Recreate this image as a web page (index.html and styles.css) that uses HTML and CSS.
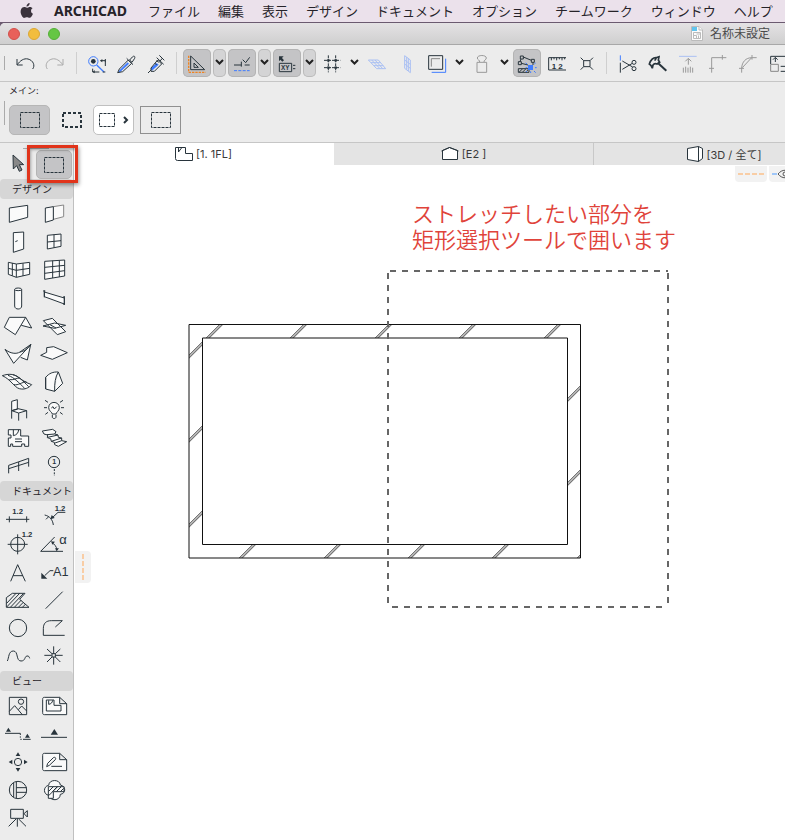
FILE: index.html
```
<!DOCTYPE html>
<html lang="ja">
<head>
<meta charset="utf-8">
<title>名称未設定 - ARCHICAD</title>
<link rel="stylesheet" href="styles.css">
</head>
<body>
<nav class="menubar" aria-label="メニューバー">
  <svg class="apple" viewBox="0 0 14 17" aria-hidden="true"><path d="M9.800 0c.1 1.100-.3 2-.9 2.700-.6.700-1.500 1.200-2.400 1.100-.1-1 .4-2 .9-2.600C8 .5 9 .1 9.800 0zM12.900 5.700c-1 .6-1.600 1.500-1.600 2.700 0 1.400.8 2.400 2 2.900-.3.900-.7 1.700-1.200 2.500-.7 1-1.400 2-2.500 2s-1.400-.6-2.700-.6-1.700.6-2.700.6C3 15.900 2.300 14.900 1.600 13.900.2 11.900-.3 8.600.800 6.500c.7-1.400 1.900-2.200 3.200-2.200 1.200 0 2 .7 3 .7.9 0 1.700-.8 3.200-.8 1.100 0 2.100.6 2.700 1.500z"/></svg>
  <strong class="app-name">ARCHICAD</strong>
  <span>ファイル</span><span>編集</span><span>表示</span><span>デザイン</span><span>ドキュメント</span><span>オプション</span><span>チームワーク</span><span>ウィンドウ</span><span>ヘルプ</span>
</nav>

<div class="window">
  <header class="titlebar">
    <div class="lights">
      <button class="light close" aria-label="閉じる"></button>
      <button class="light minimize" aria-label="しまう"></button>
      <button class="light zoom" aria-label="拡大"></button>
    </div>
    <div class="doc-title">
      <svg viewBox="0 0 12 15" width="12" height="15" aria-hidden="true"><path class="page" d="M.5.500h7.500l3.500 3.500v10.500H.5z"/><path class="page-tint" d="M1 1h5v4H1z"/><path class="page" d="M8 .5V4h3.500"/><path class="page-lines" d="M2.500 6.500h7v6h-7zM2.500 9.500h3v3M5.500 8h4M7.500 9.500v3"/></svg>
      <span>名称未設定</span>
    </div>
  </header>

  <div class="toolbar" role="toolbar" aria-label="標準">
    <span class="grip"></span>
    <button class="tool" aria-label="取り消し"><svg viewBox="36 144 90 90"><path d="M51 177v18h17M52 194c8-12 20-20 32-17 16 4 22 20 14 30"/></svg></button>
    <button class="tool" aria-label="やり直し"><svg class="dim" viewBox="126 144 90 90"><path d="M189 177v18h-17M188 194c-8-12-20-20-32-17-16 4-22 20-14 30"/></svg></button>
    <span class="sep"></span>
    <button class="tool" aria-label="検索と選択"><svg viewBox="246 144 90 90"><circle cx="280" cy="184" r="14" class="blue"/><path d="M290 195l22 21" class="blue thick"/><circle cx="280" cy="184" r="7" class="solid"/><path d="M302 182h14v16M316 177v8M278 206v10h20M308 216h8"/><path d="M300 182l7-5v10zM278 216l6-6v10z" class="solid"/></svg></button>
    <button class="tool" aria-label="スポイト"><svg viewBox="336 144 90 90"><path d="M383 187l-24 23-5 8 9-4 24-23" class="bluefill"/><path d="M353 218l5-11 27-27 10 10-27 25zM380 175l19 19M389 180l8-9c5-5 9-2 7 4l-8 12z"/></svg></button>
    <button class="tool" aria-label="パラメータ転送"><svg viewBox="426 144 90 90"><path d="M470 189l-18 16 4 7 20-18z" class="bluefill"/><path d="M444 219l10-10M453 204l20-24 12 12-22 22h-10zM470 173l21 20M478 166l15 15M480 183l8-9M470 182l6 5M464 189l6 6"/></svg></button>
    <span class="sep"></span>
    <button class="tool on" aria-label="ガイド線"><svg viewBox="546 144 90 90"><path d="M572 168v41h42zM582 189v13h13z"/><path d="M566 167v50h51" class="orange" stroke-dasharray="7 3"/></svg></button>
    <button class="drop on" aria-label="ガイド線の設定"><svg viewBox="0 0 15 30"><path d="M4 12l3.500 3.500L11 12"/></svg></button>
    <button class="tool on" aria-label="スナップガイド"><svg viewBox="681 144 90 90"><path d="M702 195h22M734 195h15M724 185v15M728 179l9 9 12-16"/><path d="M702 212h47" class="blue" stroke-dasharray="9 4"/></svg></button>
    <button class="drop on" aria-label="スナップガイドの設定"><svg viewBox="0 0 15 30"><path d="M4 12l3.500 3.500L11 12"/></svg></button>
    <button class="tool on" aria-label="座標表示"><svg viewBox="816 144 90 90"><path d="M838 190h37v25h-37zM879 196h7M879 206h7"/><path d="M837 169h14l-5 5 6 7-5 4-6-6-4 5z" class="solid"/><text x="843" y="209" class="t-xy">XY</text></svg></button>
    <button class="drop on" aria-label="座標表示の設定"><svg viewBox="0 0 15 30"><path d="M4 12l3.500 3.500L11 12"/></svg></button>
    <button class="tool" aria-label="グリッドスナップ"><svg viewBox="951 144 90 90"><path d="M985 166v51M1007 166v51M972 181h49M972 203h49" stroke-dasharray="9 3"/><path d="M985 181h.1M1007 181h.1M985 203h.1M1007 203h.1" class="dots"/></svg></button>
    <button class="drop" aria-label="グリッドの設定"><svg viewBox="0 0 15 30"><path d="M4 12l3.500 3.500L11 12"/></svg></button>
    <button class="tool" aria-label="編集平面"><svg class="pale" viewBox="1086 144 90 90"><path d="M1105 180h30l22 26h-27zM1113 188h29M1121 197h29M1115 180l25 26M1125 180l23 26"/></svg></button>
    <button class="tool" aria-label="垂直平面"><svg class="pale" viewBox="21 144 90 90"><path d="M59 167l17 13v38l-17-13zM65 171v38M70 175v38M59 180l17 13M59 192l17 13"/></svg></button>
    <button class="tool" aria-label="トレース"><svg viewBox="111 144 90 90"><path d="M140 217h42v-41" class="blue"/><path d="M131 167h42v41h-42z"/><path d="M139 200v-24h26" class="gray"/></svg></button>
    <button class="drop" aria-label="トレースの設定"><svg viewBox="0 0 15 30"><path d="M4 12l3.500 3.500L11 12"/></svg></button>
    <button class="tool" aria-label="重力"><svg class="gray-icon" viewBox="246 144 90 90"><path d="M284 186c1-6-7-6-7-12 0-10 27-10 27 0 0 6-8 6-7 12M276 187h29v30h-29z"/></svg></button>
    <button class="drop" aria-label="重力の設定"><svg viewBox="0 0 15 30"><path d="M4 12l3.500 3.500L11 12"/></svg></button>
    <button class="tool on" aria-label="辺のハンドル"><svg viewBox="381 144 90 90"><path d="M406 168h9v9h-9zM439 178h9v9h-9zM400 185h9v9h-9zM415 171l24 10M409 190l20 5M444 187v8M408 177l-3 8M400 206h32v11h-32zM403 216l9-9M413 216l9-9M423 216l8-9"/><path d="M429 195h15v15h-15z" class="bluefill"/><path d="M426 192l-4-3M448 192l4-3M450 203h5M447 213l5 5M426 213l-3 3M437 214v5M422 203h5" class="blue"/></svg></button>
    <button class="tool" aria-label="寸法"><svg viewBox="471 144 90 90"><path d="M543 173h-52v37h52M499 173v8M507 173v5M515 173v8M523 173v5M531 173v8M539 173v5"/><text x="500" y="206" class="t-rule">1</text><text x="520" y="206" class="t-rule">2</text></svg></button>
    <button class="tool" aria-label="交差を表示"><svg viewBox="561 144 90 90"><path d="M596 182h19v18h-19zM587 173l9 9M624 173l-9 9M587 209l9-9M624 209l-9-9"/></svg></button>
    <span class="sep"></span>
    <button class="tool" aria-label="分割"><svg viewBox="681 144 90 90"><path d="M706 166v16" class="blue"/><path d="M706 188v30M712 183l31 18M712 208l30-18"/><circle cx="747" cy="187" r="6"/><circle cx="747" cy="206" r="6"/></svg></button>
    <button class="tool" aria-label="調整"><svg viewBox="771 144 90 90"><path class="heavy-tool" d="M793 192c4-12 9-19 20-19l9-3-2 10 4 7-8 5c-5-2-8-3-12 3l-2 10c-2-7-5-11-9-13zM814 174l-5 8"/><path d="M818 188l26 24" class="thicker"/></svg></button>
    <button class="tool" aria-label="上に調整"><svg class="gray-icon" viewBox="861 144 90 90"><path d="M882 169h53" class="pale-line"/><path d="M910 194v-18M901 184l9-9 9 9M895 203v15M902 200v18M909 203v15M916 200v18M923 203v15"/></svg></button>
    <button class="tool" aria-label="交差"><svg class="gray-icon" viewBox="951 144 90 90"><path d="M980 218v-45h44M972 205h15M1012 165v14"/></svg></button>
    <button class="tool" aria-label="フィレット"><svg class="gray-icon" viewBox="1041 144 90 90"><path d="M1070 218v-14c1-18 12-31 31-31h14M1062 205h15M1101 165v14M1072 203l27-29"/></svg></button>
    <button class="tool" aria-label="サイズ変更"><svg viewBox="1131 144 90 90"><path d="M1157 192v-23h54v45h-24M1171 186v-13M1164 179l7-7 7 7M1187 199h20"/><path d="M1157 193h23v21h-23z" class="gray"/></svg></button>
  </div>

  <div class="infobox">
    <span class="info-label">メイン:</span>
    <div class="info-row">
      <button class="info-btn on" aria-label="矩形選択"><svg viewBox="0 0 20 16"><path d="M.5.500h19v15H.5z" stroke-dasharray="3 1"/></svg></button>
      <button class="info-btn" aria-label="全フロア選択"><svg viewBox="0 0 20 16"><path class="heavy" d="M1 1h18v14H1z" stroke-dasharray="3 2"/></svg></button>
      <button class="info-btn white" aria-label="選択形状"><svg class="small" viewBox="0 0 16 14"><path d="M.5.500h15v13H.5z" stroke-dasharray="3 1"/></svg><svg class="next" viewBox="0 0 6 8"><path d="M1 1l3 3-3 3"/></svg></button>
      <button class="info-btn framed" aria-label="矩形"><svg viewBox="0 0 20 16"><path d="M.5.500h19v15H.5z" stroke-dasharray="3 1"/></svg></button>
    </div>
  </div>

  <div class="workspace">
    <aside class="toolbox">
      <div class="select-row">
        <button class="cell" aria-label="矢印"><svg viewBox="0 189 108 105"><path d="M39 225l1 42 10-10 8 17 8-4-8-16h13z" class="arrow"/></svg></button>
        <button class="cell marquee" aria-label="矩形選択ツール"><svg viewBox="0 0 20 16"><path d="M.5.500h19v15H.5z" stroke-dasharray="3 1"/></svg></button>
        <span class="highlight"></span>
      </div>
      <h2>デザイン</h2>
      <div class="grid">
        <button class="cell" aria-label="壁"><svg viewBox="0 0 108 84"><path class="w" d="M28 24l55-8v36l-55 15z"/></svg></button>
        <button class="cell" aria-label="壁端部"><svg viewBox="108 0 108 84"><path class="w gray" d="M160 20l31-5v35l-31 8z"/><path class="w" d="M136 24l24-4v40l-24 7z"/></svg></button>
        <button class="cell" aria-label="ドア"><svg viewBox="0 84 108 84"><path class="w" d="M40 98l31-2v51l-31 10z"/><path d="M46 125l7-3"/></svg></button>
        <button class="cell" aria-label="窓"><svg viewBox="108 84 108 84"><path class="w" d="M142 106l41-4v37l-41 8zM162 104v39M142 126l41-4"/></svg></button>
        <button class="cell" aria-label="コーナー窓"><svg viewBox="0 168 108 84"><path class="w" d="M25 187l24 5 40-5v36l-40 9-24-9zM37 189v38M49 192v40M69 190v38M25 205l24 6 40-6"/></svg></button>
        <button class="cell" aria-label="カーテンウォール"><svg viewBox="108 168 108 84"><path class="w" d="M134 184l60-4v48l-60 10zM158 182v52M178 181v50M134 202l60-6M134 220l60-8"/></svg></button>
        <button class="cell" aria-label="柱"><svg viewBox="0 252 108 84"><path class="w" d="M44 269v49c0 12 21 12 21 0v-49z"/><ellipse class="w" cx="54.500" cy="268" rx="10.500" ry="4"/></svg></button>
        <button class="cell" aria-label="梁"><svg viewBox="108 252 108 84"><path class="w" d="M133 276l60 18v18l-60-22zM133 271v21M193 289v26M129 273h7M189 291h6M189 312h6"/></svg></button>
        <button class="cell" aria-label="屋根"><svg viewBox="0 336 108 84"><path class="w" d="M28 352h49l-31 52-33-22zM77 352l18 32-31-8"/></svg></button>
        <button class="cell" aria-label="スカイライト"><svg viewBox="108 336 108 84"><path class="w" d="M130 362l27-7 40 40-25 9zM129 378l35-9 33 7-33 9zM150 374l18 10"/></svg></button>
        <button class="cell" aria-label="シェル"><svg viewBox="0 0 108 84"><path class="w" d="M15 28c16 13 34 15 45 8l33-23-52 57zM60 36c12-2 22-8 32-22l-10 46-20-8"/></svg></button>
        <button class="cell" aria-label="スラブ"><svg viewBox="108 0 108 84"><path class="w" d="M140 23l21-3 41 18-45 20-35-12 18-9z"/></svg></button>
        <button class="cell" aria-label="メッシュ"><svg viewBox="0 84 108 84"><path class="w" d="M7 107c20-7 35-4 44 2s24 19 44 25c-9 10-22 16-37 12S32 118 7 107zM24 106c20 7 34 24 50 39M38 104c18 4 32 20 48 36M28 119c12 2 22-5 31-5M42 134c12 3 25-8 37-9"/></svg></button>
        <button class="cell" aria-label="モルフ"><svg viewBox="108 84 108 84"><path class="w" d="M137 112c10-12 22-17 38-16l13 34-24 24-27-7zM137 112v35M175 96c-9 14-12 35-11 58"/></svg></button>
        <button class="cell" aria-label="オブジェクト"><svg viewBox="0 168 108 84"><path class="w" d="M35 184l17-5v29l-17 4zM35 212l19-6 26 6-24 7zM35 212v24M56 219v23M80 212v23"/></svg></button>
        <button class="cell" aria-label="ランプ"><svg viewBox="108 168 108 84"><path class="w" d="M157 222c0-5-11-9-11-19 0-21 32-21 32 0 0 10-10 14-10 19zM157 224v7c0 6 11 6 11 0v-7"/><path d="M154 204l5-4 4 7 7-7M132 203h9M183 203h9M135 181l9 6M189 181l-9 6M136 223l8-6M188 223l-8-6"/></svg></button>
        <button class="cell" aria-label="ゾーン"><svg viewBox="0 252 108 84"><path class="w" d="M25 269h37v19h24v31H74v-7h-9v7H38v-7h-6v7h-7v-25h8v-9h-8z"/><path d="M40 269v18c10-2 15-8 16-18M45 297h21M45 305h21"/></svg></button>
        <button class="cell" aria-label="階段"><svg viewBox="108 252 108 84"><path class="w" d="M127 273l31-5 10 7-4 7 10 3 1 7 10 2v8l15 3-25 14-11-5-1-7-9-3-2-8-10-3 1-8-11-3zM141 284l23-2M143 292l31-7M154 304l31-10M165 309l20-7"/></svg></button>
        <button class="cell" aria-label="手摺り"><svg viewBox="0 336 108 84"><path d="M26 400v-24l60-21v25M56 366v27M26 386l60-19"/></svg></button>
        <button class="cell" aria-label="柱芯"><svg viewBox="108 336 108 84"><circle cx="162" cy="366" r="17"/><text x="157" y="373" class="t-num">1</text><path d="M163 387v21" stroke-dasharray="6 4"/></svg></button>
      </div>
      <h2>ドキュメント</h2>
      <div class="grid">
        <button class="cell" aria-label="直線寸法"><svg viewBox="0 66 108 84"><path d="M18 118h70M28 109v18M80 109v18"/><text x="37" y="103" class="t-dim">1.2</text></svg></button>
        <button class="cell" aria-label="半径寸法"><svg viewBox="108 66 108 84"><path d="M134 105c14 3 24 13 26 30M196 97h-22l-19 18M145 111l-7 7"/><path d="M151 118l4-13 9 9z" class="solid"/><text x="164" y="92" class="t-dim">1.2</text></svg></button>
        <button class="cell" aria-label="高さ寸法"><svg viewBox="0 150 108 84"><circle cx="53" cy="193" r="21"/><path d="M23 193h60M53 163v60"/><text x="65" y="171" class="t-dim">1.2</text></svg></button>
        <button class="cell" aria-label="角度寸法"><svg viewBox="108 150 108 84"><path d="M164 171l-42 43h67M156 188c7 4 14 12 15 22"/><path d="M153 184l12 1-8 9zM165 205h12l-7 9z" class="solid"/><text x="178" y="193" class="t-alpha">α</text></svg></button>
        <button class="cell" aria-label="テキスト"><svg viewBox="0 234 108 84"><path d="M32 304l21-50 23 50M39 287h30"/></svg></button>
        <button class="cell" aria-label="ラベル"><svg viewBox="108 234 108 84"><path d="M134 287l16-15h10"/><path d="M124 278v18h18z" class="solid"/><text x="159" y="288" class="t-label">A1</text></svg></button>
        <button class="cell" aria-label="塗りつぶし"><svg viewBox="0 318 108 84"><path d="M19 382v-29l18-13h38l-16 18 28 24zM20 370l28-30M20 381l39-41M31 382l39-41M43 382l21-22M55 382l15-15M67 382l10-10"/></svg></button>
        <button class="cell" aria-label="線"><svg viewBox="108 318 108 84"><path d="M137 386l51-51"/></svg></button>
        <button class="cell" aria-label="円"><svg viewBox="0 402 108 84"><circle cx="54" cy="444" r="26"/></svg></button>
        <button class="cell" aria-label="ポリライン"><svg viewBox="108 402 108 84"><path d="M194 466h-64v-20c0-16 8-24 24-24h33l-21 19"/></svg></button>
        <button class="cell" aria-label="スプライン"><svg viewBox="0 486 108 84"><path d="M22 543c5-9 3-30 18-30 16 0 7 30 23 30 14 0 10-14 18-15 5-1 7 3 8 7"/></svg></button>
        <button class="cell" aria-label="ホットスポット"><svg viewBox="108 486 108 84"><path d="M161 499v22M161 531v23M133 526h22M166 526h22M141 507l15 14M181 507l-15 14M141 546l15-15M181 546l-15-15M156 521h10v10h-10z"/></svg></button>
      </div>
      <h2>ビュー</h2>
      <div class="grid">
        <button class="cell" aria-label="図"><svg viewBox="0 81 108 84"><path d="M28 97h52v52H28zM28 139l16-17 23 27M55 134l10-11 15 15"/><circle cx="63" cy="110" r="8"/></svg></button>
        <button class="cell" aria-label="図面"><svg viewBox="108 81 108 84"><path class="w" d="M133 97h46l21 19v33h-67c-4 0-5-2-5-6v-40c0-4 1-6 5-6zM179 97v19h21M139 105h23v16h21v17h-44zM146 106v12c7-1 11-5 12-12"/></svg></button>
        <button class="cell" aria-label="断面図"><svg viewBox="0 165 108 84"><path d="M15 205h46v5M61 214v4M61 223h4M69 223h23"/><path d="M18 200l7-12 8 12zM75 218l7-12 8 12z" class="solid"/></svg></button>
        <button class="cell" aria-label="立面図"><svg viewBox="108 165 108 84"><path d="M123 217h78"/><path d="M152 209l11-17 11 17z" class="solid"/></svg></button>
        <button class="cell" aria-label="展開図"><svg viewBox="0 249 108 84"><circle cx="54" cy="291" r="11"/><path d="M47 273l7-11 7 11zM47 309l7 11 7-11zM37 284l-11 7 11 7zM72 284l11 7-11 7z" class="solid"/></svg></button>
        <button class="cell" aria-label="ワークシート"><svg viewBox="108 249 108 84"><path class="w" d="M133 265h46l21 19v33h-67c-4 0-5-2-5-6v-40c0-4 1-6 5-6zM179 265v19h21M140 305l3-10 17-17c5-3 9 1 6 6l-18 17zM154 304h32"/></svg></button>
        <button class="cell" aria-label="詳細図"><svg viewBox="0 333 108 84"><circle cx="54" cy="375" r="26"/><path d="M41 353v44M49 350v50M49 368h31M49 382h31"/></svg></button>
        <button class="cell" aria-label="変更"><svg viewBox="108 333 108 84"><path class="w" d="M146 361c1-19 34-19 35-1 18 4 17 26 0 28-1 21-30 21-34 3-18-2-18-27-1-30z"/><path class="w" d="M145 365h47v15h-32v20h-15zM146 379l14-14M146 392l27-27M157 380l15-15M169 380l14-14M181 380l10-10"/></svg></button>
        <button class="cell" aria-label="カメラ"><svg viewBox="0 417 108 84"><path d="M32 433h38v27H32zM72 446l10-9v19zM52 460v25M48 462l-22 22M56 462l22 22"/></svg></button>
      </div>
    </aside>

    <main class="content">
      <div class="tabs" role="tablist">
        <button class="tab active" role="tab"><svg viewBox="0 0 18 16"><path d="M.5 1.500h10v6h7v7h-15a2 2 0 0 1-2-2zM3.500 2v4l3-4"/></svg><span>[1. 1FL]</span></button>
        <button class="tab" role="tab"><svg viewBox="0 0 18 16"><path d="M1.500 13.500v-9l7-3 8 3v9zM.5 5l8-3.500L17.500 5"/></svg><span>[E2 ]</span></button>
        <button class="tab" role="tab"><svg viewBox="0 0 18 16"><path d="M1.500 2.500l11-2v15l-11-2zM12.500.500l4 2v10l-4 3"/></svg><span>[3D / 全て]</span></button>
      </div>
      <div class="canvas">
        <div class="pills">
          <span class="pill"><svg viewBox="0 0 26 2"><path d="M0 1h26" class="orange-dash"/></svg></span>
          <span class="pill"><svg class="eye" viewBox="0 0 26 10"><path d="M0 5h5" class="blue-dash"/><path d="M6 5c4-5 10-5 14 0-4 5-10 5-14 0z"/><circle cx="13" cy="5" r="2"/></svg></span>
        </div>
        <span class="pill side"><svg viewBox="0 0 2 26"><path d="M1 0v26" class="orange-dash"/></svg></span>
        <p class="note">ストレッチしたい部分を<br>矩形選択ツールで囲います</p>
        <svg class="plan" viewBox="180 260 500 360" role="img" aria-label="壁と選択範囲">
          <defs><clipPath id="wall"><path clip-rule="evenodd" d="M189 324h392v234H189zM202 338v207h366V338z"/></clipPath></defs>
          <g clip-path="url(#wall)">
            <path class="hatch" d="M-24 570l260-260M60 570l260-260M145 570l260-260M229 570l260-260M314 570l260-260M398 570l260-260M482 570l260-260M567 570l260-260"/>
            <path class="hatch-edge" d="M-26 570l260-260M58 570l260-260M143 570l260-260M227 570l260-260M312 570l260-260M396 570l260-260M480 570l260-260M565 570l260-260M-23 570l260-260M61 570l260-260M146 570l260-260M230 570l260-260M315 570l260-260M399 570l260-260M483 570l260-260M568 570l260-260"/>
          </g>
          <path class="outline" d="M189 324.500h391.500V558H189zM202.500 338h365v206.500h-365z"/>
          <path class="selection" d="M390 271h278M388 273v334M668 273v334M392 607h276"/>
        </svg>
      </div>
    </main>
  </div>
</div>
</body>
</html>
```
FILE: styles.css
```
* { box-sizing: border-box; }

body {
  margin: 0;
  height: 100vh;
  display: flex;
  flex-direction: column;
  overflow: hidden;
  background: #6b5a70;
  color: #262329;
  font-family: Inter, "Noto Sans CJK JP", sans-serif;
}

button {
  margin: 0;
  padding: 0;
  border: 0;
  background: none;
  font: inherit;
  color: inherit;
}

svg { display: block; fill: none; stroke: #28343c; }

/* menu bar */
.menubar {
  flex: none;
  height: 22px;
  display: flex;
  align-items: center;
  gap: 18px;
  padding-left: 20px;
  background: #ebe1eb;
  font-size: 13px;
  line-height: 22px;
  white-space: nowrap;
  overflow: hidden;
}
.apple { width: 14px; height: 16px; fill: #3a323c; stroke: none; flex: none; }
.app-name { font-family: "Noto Sans", sans-serif; font-size: 14px; width: 76px; margin: 0 0 0 2px; }

/* window */
.window {
  flex: 1;
  min-height: 0;
  margin-top: 1px;
  display: flex;
  flex-direction: column;
  border-radius: 5px 0 0 0;
  background: #ececec;
  overflow: hidden;
}
.titlebar {
  flex: none;
  height: 22px;
  display: flex;
  align-items: center;
  justify-content: space-between;
  padding: 0 15px 0 8px;
  background: linear-gradient(#e4e2e4, #cfcfcf);
  border-bottom: 1px solid #a8a8a8;
}
.lights { display: flex; gap: 8px; }
.light { width: 12px; height: 12px; border-radius: 50%; }
.close { background: #e8605a; border: 1px solid #d1504b; }
.minimize { background: #f2bd3d; border: 1px solid #dba634; }
.zoom { background: #65c644; border: 1px solid #55ae38; }
.doc-title { display: flex; align-items: center; gap: 7px; font-size: 12px; line-height: 20px; color: #4a4a4a; }
.page { fill: #fbfbfb; stroke: #bbb; }
.page-tint { fill: #62c4ee; stroke: none; }
.page-lines { stroke: #bbb; }

/* toolbar */
.toolbar {
  flex: none;
  height: 37px;
  display: flex;
  align-items: center;
  border-bottom: 1px solid #c6c6c6;
  overflow: hidden;
}
.grip { flex: none; width: 12px; height: 14px; position: relative; }
.grip::before { content: ""; position: absolute; left: 4px; top: 0; height: 14px; width: 1px; background: #aaa; }
.sep { flex: none; width: 10px; height: 22px; background: linear-gradient(#cfcfcf, #cfcfcf) 4px 0 / 1px 100% no-repeat; }
.tool { flex: none; width: 30px; height: 30px; border-radius: 6px; }
.tool svg { width: 30px; height: 30px; stroke-width: 3; }
.drop { flex: none; width: 15px; height: 30px; border-radius: 6px; }
.drop svg { width: 15px; height: 30px; stroke: #222; stroke-width: 2; }
.tool.on, .drop.on { border: 1px solid transparent; background-clip: padding-box; background-color: #c4c4c6; box-shadow: inset 0 0 0 1px #b4b4b4; }
.drop.on { background-color: #d4d4d5; box-shadow: inset 0 0 0 1px #bcbcbc; }
.toolbar .on svg { margin: -1px; }
.toolbar .gray-icon { stroke: #999; }
.dim { stroke: #aaa; }
.pale { stroke: #aac0f3; }
.pale-line { stroke: #aac0f3; }
.blue { stroke: #3f7cff; }
.bluefill { fill: #3f7cff; stroke: none; }
.orange { stroke: #f08421; stroke-width: 4; }
.gray { stroke: #888; }
.thick { stroke-width: 4; }
.thicker { stroke-width: 6; }
.heavy-tool { stroke-width: 5; }
.dots { stroke-width: 7; stroke-linecap: square; }
.solid { fill: #28343c; stroke: none; }
text { fill: #28343c; stroke: none; font-family: "Liberation Sans", sans-serif; }
.t-xy { font-size: 19px; font-weight: bold; }
.t-num { font-size: 21px; font-weight: bold; }
.t-rule { font-size: 24px; font-weight: bold; }
.t-dim { font-size: 23px; font-weight: bold; }
.t-alpha { font-size: 39px; }
.t-label { font-size: 38px; }

/* info box */
.infobox {
  flex: none;
  height: 61px;
  padding: 3px 0 0 9px;
  position: relative;
  border-bottom: 1px solid #c6c6c6;
}
.infobox::before { content: ""; position: absolute; left: 4px; top: 19px; height: 24px; width: 1px; background: #aaa; }
.info-label { display: block; font-size: 9px; line-height: 12px; margin-bottom: 8px; }
.info-row { display: flex; gap: 1px; }
.info-btn { width: 41px; height: 30px; border-radius: 5px; display: flex; align-items: center; justify-content: center; gap: 8px; }
.info-btn svg { flex: none; width: 20px; height: 16px; }
.info-btn .small { width: 16px; height: 14px; }
.info-btn .next { width: 6px; height: 8px; stroke-width: 2; }
.info-btn.on { background: #c4c4c6; border: 1px solid #b6b6b6; }
.info-btn.white { background: #fff; border: 1px solid #c0c0c0; }
.info-btn.framed { height: 28px; align-self: center; margin-left: 5px; border: 1px solid #909090; border-radius: 0; }
.info-btn .heavy { stroke-width: 2; }

/* workspace */
.workspace { flex: 1; min-height: 0; display: flex; }
.toolbox { flex: none; width: 74px; border-right: 1px solid #c0c0c0; }
.toolbox h2 {
  margin: 1px 0;
  height: 20px;
  padding-left: 12px;
  border-radius: 4px;
  background: #d6d6d6;
  font-size: 10px;
  font-weight: 400;
  line-height: 20px;
  white-space: nowrap;
}
.select-row { height: 35px; display: flex; position: relative; }
.select-row::before { content: ""; position: absolute; left: 23px; top: 5px; width: 26px; height: 1px; background: #aaa; }
.select-row .cell { height: 35px; }
.select-row .cell svg { height: 35px; }
.select-row .marquee { width: 36px; height: 29px; margin-top: 7px; background: #c4c4c6; border: 1px solid #b4b4b4; border-radius: 5px; display: grid; place-items: center; }
.select-row .marquee svg { width: 20px; height: 16px; stroke-width: 1; }
.highlight {
  position: absolute;
  z-index: 2;
  left: 27px;
  top: 2px;
  width: 51px;
  height: 38px;
  border: 3px solid #e1341b;
  box-shadow: 1px 2px 4px rgba(0, 0, 0, .4), inset 1px 2px 3px rgba(0, 0, 0, .3);
  pointer-events: none;
}
.grid { display: grid; grid-template-columns: 36px 36px; grid-auto-rows: 28px; }
.cell { width: 36px; height: 28px; }
.cell svg { width: 36px; height: 28px; stroke-width: 3; }
.w { fill: #fafafa; }
.arrow { fill: #888; }

/* tabs */
.content { flex: 1; min-width: 0; display: flex; flex-direction: column; background: #fff; }
.tabs { flex: none; height: 22px; display: flex; overflow: hidden; }
.tab {
  flex: none;
  width: 260px;
  height: 22px;
  display: flex;
  align-items: center;
  justify-content: center;
  gap: 3px;
  background: #e4e4e4;
  border-right: 1px solid #c8c8c8;
  font-size: 11px;
  color: #3a3a3a;
  white-space: nowrap;
}
.tab.active { background: #fff; border-right-color: #fff; }
.tab svg { width: 18px; height: 16px; fill: #fff; }

/* drawing area */
.canvas { flex: 1; min-height: 0; position: relative; overflow: hidden; }
.pills { position: absolute; left: 661px; top: 1px; display: flex; gap: 2px; }
.pill { width: 32px; height: 16px; display: grid; place-items: center; background: #f2f2f2; border-radius: 0 0 4px 4px; }
.pill svg { width: 26px; height: 2px; }
.pill .eye { height: 10px; stroke: #555; }
.pill.side { position: absolute; left: 1px; top: 386px; width: 16px; height: 32px; border-radius: 0 4px 4px 0; }
.pill.side svg { width: 2px; height: 26px; }
.orange-dash { stroke: #ffa858; stroke-dasharray: 5 2; }
.blue-dash { stroke: #4c9bff; }
.note {
  position: absolute;
  left: 338px;
  top: 34px;
  margin: 0;
  color: #e0433a;
  font-family: "Noto Sans CJK JP", sans-serif;
  font-size: 22px;
  font-weight: 350;
  line-height: 26px;
  white-space: nowrap;
}
.plan { position: absolute; left: 106px; top: 95px; width: 500px; height: 360px; }
.hatch { stroke: #b4b4b4; stroke-width: 3; }
.hatch-edge { stroke: #777; stroke-width: 1; }
.outline { stroke: #111; stroke-width: 1; }
.selection { stroke: #666; stroke-width: 2; stroke-dasharray: 6 6; }
```
